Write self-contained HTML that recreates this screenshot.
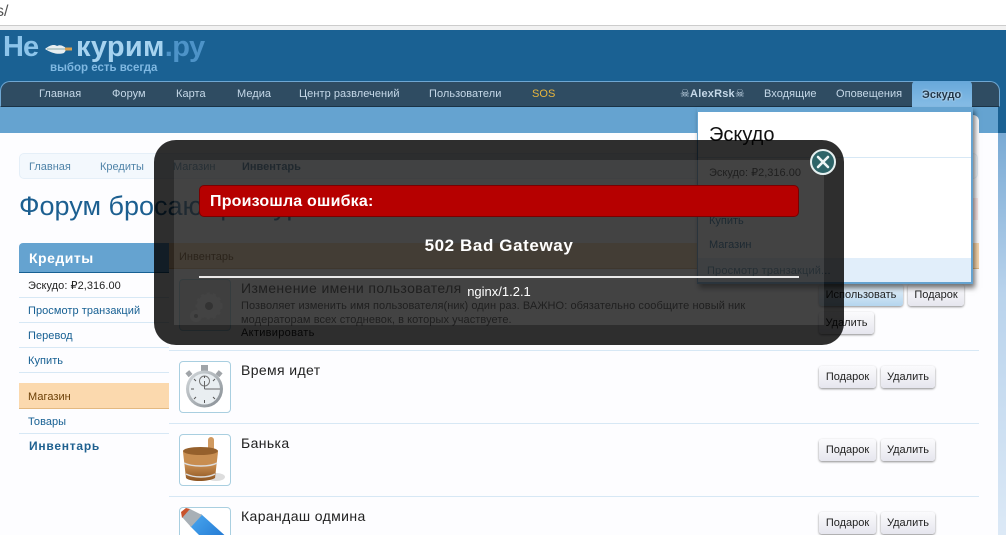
<!DOCTYPE html>
<html lang="ru"><head><meta charset="utf-8">
<style>
html,body{margin:0;padding:0;width:1006px;height:535px;overflow:hidden}
#w{position:relative;width:1006px;height:535px;overflow:hidden;background:#fff;font-family:"Liberation Sans","DejaVu Sans",sans-serif;font-size:11px;color:#222}
.a{position:absolute;white-space:nowrap}
.nav{color:#c5d8e8;font-size:11px;top:88px;line-height:13px;letter-spacing:.05px}
.side{left:28px;font-size:11px;line-height:13px;color:#176093;letter-spacing:.05px}
.ln{position:absolute;height:1px;background:#d7e8f5}
.btn{position:absolute;height:22px;line-height:23px;text-align:center;font-size:11px;color:#222;background:linear-gradient(#fbfbfd,#e6e6ee);border-radius:3px;box-shadow:0 1px 2px rgba(0,0,0,.45)}
.ico{position:absolute;left:179px;width:50px;height:50px;border:1px solid #a9cfe0;border-radius:4px;background:#fff;overflow:hidden}
.t{left:241px;font-size:14px;line-height:16px;color:#222;letter-spacing:.38px}
.lg{font-size:29px;line-height:36px;font-weight:bold;letter-spacing:.3px}
</style></head><body><div id="w">
<div class="a" style="left:-4px;top:2px;font-size:16px;line-height:20px;color:#555">s/</div>
<div class="a" style="left:0;top:25px;width:1006px;height:5px;background:linear-gradient(#ccc,#ccc 1px,#f1f1f1 1px,#f1f1f1)"></div>
<div class="a" style="left:0;top:30px;width:1006px;height:103px;background:#1a6193"></div>
<div class="a" style="left:0;top:107px;width:998px;height:26px;background:#65a3d0"></div>
<div class="a" style="left:0;top:133px;width:1006px;height:402px;background:#fdfdff"></div>
<div class="a" style="left:998px;top:133px;width:8px;height:402px;background:linear-gradient(#79aad4,#b9d3ec 40%,#dce9f6)"></div>
<div class="a" style="left:965px;top:115px;width:14px;height:20px;background:#fdfdff;border-radius:0 6px 0 0"></div>

<!-- Logo -->
<div class="a lg" style="left:3px;top:29px;color:#8cc4ea;letter-spacing:-1px">Не</div>
<svg class="a" style="left:44px;top:40px" width="30" height="18" viewBox="0 0 30 18"><path d="M1 9 C6 5 10 4 13 6 C16 4 20 6 23 9 L20 13 C14 15 7 13 1 9Z" fill="#e8eef0"/><path d="M3 9 H21" stroke="#8aa" stroke-width="1"/><rect x="21" y="7.500" width="7" height="3" fill="#d8a050"/></svg>
<div class="a lg" style="left:76px;top:29px;color:#a6d3f0">курим<span style="color:#4d93c8;letter-spacing:-.6px">.ру</span></div>
<div class="a" style="left:50px;top:61px;font-size:11.500px;line-height:15px;font-weight:bold;color:#7fb8e2">выбор есть всегда</div>

<!-- Nav bar -->
<div class="a" style="left:0;top:81px;width:1000px;height:26px;box-sizing:border-box;background:#2f4c62;border:1px solid #6fa7d2;border-bottom:1px solid #1a3245;border-radius:10px 10px 0 0"></div>
<div class="a nav" style="left:39px;top:88px">Главная</div>
<div class="a nav" style="left:112px">Форум</div>
<div class="a nav" style="left:176px">Карта</div>
<div class="a nav" style="left:237px">Медиа</div>
<div class="a nav" style="left:299px">Центр развлечений</div>
<div class="a nav" style="left:429px">Пользователи</div>
<div class="a nav" style="left:532px;color:#e8b53c">SOS</div>
<div class="a nav" style="left:680px;font-weight:bold;letter-spacing:.2px">☠AlexRsk☠</div>
<div class="a nav" style="left:764px">Входящие</div>
<div class="a nav" style="left:836px">Оповещения</div>
<div class="a" style="left:912px;top:81px;width:60px;height:31px;border-radius:4px 4px 0 0;background:linear-gradient(#67a8da,#8dc1e8)"></div>
<div class="a nav" style="left:922px;top:89px;color:#23384a;font-weight:bold;text-shadow:0 0 2px #fff">Эскудо</div>

<!-- Breadcrumb -->
<div class="a" style="left:19px;top:153px;width:959px;height:26px;box-sizing:border-box;background:#f3f8fd;border:1px solid #e5eff8;border-radius:5px"></div>
<div class="a" style="left:29px;top:161px;line-height:13px;color:#4f83a8">Главная</div>
<div class="a" style="left:100px;top:161px;line-height:13px;color:#4f83a8">Кредиты</div>
<div class="a" style="left:173px;top:161px;line-height:13px;color:#4f83a8">Магазин</div>
<div class="a" style="left:242px;top:161px;line-height:13px;color:#2b5a80;font-weight:bold">Инвентарь</div>

<!-- Title -->
<div class="a" style="left:19px;top:190px;font-size:27px;line-height:32px;color:#1c5f90">Форум бросающих курить</div>

<!-- Sidebar -->
<div class="a" style="left:19px;top:243px;width:150px;height:30px;background:#65a3d0;border-bottom:1px solid #176093;box-sizing:border-box;border-radius:4px 0 0 0"></div>
<div class="a" style="left:29px;top:250px;font-size:14px;line-height:16px;font-weight:bold;color:#fff;letter-spacing:.5px">Кредиты</div>
<div class="a side" style="top:280px;color:#222">Эскудо: ₽2,316.00</div>
<div class="ln" style="left:19px;top:297px;width:150px"></div>
<div class="a side" style="top:305px">Просмотр транзакций</div>
<div class="ln" style="left:19px;top:322px;width:150px"></div>
<div class="a side" style="top:330px">Перевод</div>
<div class="ln" style="left:19px;top:347px;width:150px"></div>
<div class="a side" style="top:355px">Купить</div>
<div class="ln" style="left:19px;top:372px;width:150px"></div>
<div class="a" style="left:19px;top:383px;width:150px;height:26px;box-sizing:border-box;background:#fbd9ae;border-bottom:1px solid #e3b981"></div>
<div class="a side" style="top:391px;color:#6b3f06">Магазин</div>
<div class="a side" style="top:416px">Товары</div>
<div class="ln" style="left:19px;top:433px;width:150px"></div>
<div class="a side" style="left:29px;top:440px;font-weight:bold;font-size:12px;letter-spacing:.75px;color:#1f6190">Инвентарь</div>

<!-- Main content -->
<div class="a" style="left:169px;top:243px;width:810px;height:26px;box-sizing:border-box;background:#fbd9ae;border-bottom:1px solid #e3b981"></div>
<div class="a" style="left:179px;top:251px;line-height:13px;color:#6b3f06">Инвентарь</div>
<div class="a" style="left:972px;top:198px;width:6px;height:22px;background:#fde8e8"></div>

<div class="ico" style="top:279px;background:#e6e6e6"><svg width="50" height="50"><circle cx="29" cy="26" r="12" fill="#fff" stroke="#fff" stroke-width="3" stroke-dasharray="3 3"/><circle cx="29" cy="26" r="4" fill="#999"/><circle cx="16" cy="36" r="6" fill="#fff"/><circle cx="16" cy="36" r="2" fill="#aaa"/></svg></div>
<div class="a t" style="top:280px">Изменение имени пользователя</div>
<div class="a" style="left:241px;top:299px;line-height:14px;color:#222;letter-spacing:.07px">Позволяет изменить имя пользователя(ник) один раз. ВАЖНО: обязательно сообщите новый ник<br>модераторам всех стодневок, в которых участвуете.</div>
<div class="a" style="left:241px;top:327px;line-height:13px;color:#222;letter-spacing:.3px">Активировать</div>
<div class="btn" style="left:819px;top:284px;width:84px;background:linear-gradient(#eaf4fb,#b4d5ee)">Использовать</div>
<div class="btn" style="left:908px;top:284px;width:56px">Подарок</div>
<div class="btn" style="left:819px;top:312px;width:55px">Удалить</div>
<div class="ln" style="left:169px;top:350px;width:810px"></div>

<div class="ico" style="top:361px"><svg width="50" height="50" viewBox="0 0 50 50"><defs><linearGradient id="g1" x1="0" y1="0" x2="1" y2="1"><stop offset="0" stop-color="#d5dadd"/><stop offset="1" stop-color="#858c92"/></linearGradient><linearGradient id="g2" x1="0" y1="0" x2="0" y2="1"><stop offset="0" stop-color="#c98f52"/><stop offset=".5" stop-color="#c88d50"/><stop offset="1" stop-color="#8d5522"/></linearGradient><linearGradient id="g3" x1="0" y1="0" x2="1" y2="1"><stop offset="0" stop-color="#4aa8f0"/><stop offset="1" stop-color="#1568c8"/></linearGradient></defs><rect x="21" y="3" width="7" height="7" fill="#a0a4a8"/><rect x="6" y="9" width="5" height="5" fill="#a0a4a8" transform="rotate(-40 9 11)"/><rect x="37" y="9" width="5" height="5" fill="#a0a4a8" transform="rotate(40 39 11)"/><circle cx="24.500" cy="27" r="18.500" fill="url(#g1)"/><circle cx="24.500" cy="27" r="15.500" fill="#e9eef1"/><circle cx="24.500" cy="19" r="5" fill="none" stroke="#777" stroke-width="1"/><path d="M24.500 27 H40 M24.500 19 V27" stroke="#666" stroke-width="1"/><path d="M24.500 14 V16 M24.500 38 V41 M11 27 H14 M14 17 L16 19 M35 17 L33 19 M14 37 L16 35 M35 37 L33 35" stroke="#555" stroke-width="1"/></svg></div>
<div class="a t" style="top:362px">Время идет</div>
<div class="btn" style="left:819px;top:366px;width:57px">Подарок</div>
<div class="btn" style="left:881px;top:366px;width:54px">Удалить</div>
<div class="ln" style="left:169px;top:423px;width:810px"></div>

<div class="ico" style="top:434px"><svg width="50" height="50" viewBox="0 0 50 50"><ellipse cx="36" cy="42" rx="9" ry="4" fill="#ddd"/><rect x="28" y="2" width="6" height="18" rx="3" fill="#d09a60"/><path d="M3 17 C3 12 37 12 38 17 L35 43 C28 47 10 47 6 43Z" fill="url(#g2)"/><ellipse cx="20.500" cy="16" rx="17.500" ry="4" fill="#95602c"/><path d="M4 28 C12 32 30 32 37 28 M6 39 C14 43 28 43 35 39" stroke="#ddd" stroke-width="1.500" fill="none"/></svg></div>
<div class="a t" style="top:435px">Банька</div>
<div class="btn" style="left:819px;top:439px;width:57px">Подарок</div>
<div class="btn" style="left:881px;top:439px;width:54px">Удалить</div>
<div class="ln" style="left:169px;top:496px;width:810px"></div>

<div class="ico" style="top:507px"><svg width="50" height="50" viewBox="0 0 50 50"><path d="M10 18 L21 6 L50 32 L38 46Z" fill="url(#g3)"/><path d="M2 9 L10 1 L22 7 L11 19Z" fill="#a8b0b6"/><path d="M2 10 L10 1 L6 0 L1 4Z" fill="#c8532c"/></svg></div>
<div class="a t" style="top:508px">Карандаш одмина</div>
<div class="btn" style="left:819px;top:512px;width:57px">Подарок</div>
<div class="btn" style="left:881px;top:512px;width:54px">Удалить</div>

<!-- Dropdown -->
<div class="a" style="left:697px;top:107px;width:276px;height:177px;box-sizing:border-box;background:#fff;border:1px solid #65a3d0;border-top:5px solid #65a3d0;border-right:2px solid #65a3d0;border-bottom:2px solid #65a3d0;box-shadow:2px 4px 5px rgba(0,0,0,.55)"></div>
<div class="a" style="left:709px;top:123px;font-size:20px;line-height:24px;color:#111">Эскудо</div>
<div class="ln" style="left:698px;top:157px;width:273px"></div>
<div class="a" style="left:709px;top:167px;line-height:13px;color:#222">Эскудо: ₽2,316.00</div>
<div class="a" style="left:709px;top:215px;line-height:13px;color:#176093">Купить</div>
<div class="a" style="left:709px;top:239px;line-height:13px;color:#176093">Магазин</div>
<div class="a" style="left:698px;top:258px;width:273px;height:24px;background:#e1eefa"></div>
<div class="a" style="left:707px;top:265px;line-height:13px;color:#4f83a8;letter-spacing:.15px">Просмотр транзакций...</div>

<!-- Overlay -->
<div class="a" style="left:154px;top:140px;width:690px;height:205px;background:rgba(0,0,0,.82);border-radius:22px"></div>
<div class="a" style="left:174px;top:160px;width:650px;height:165px;background:rgba(255,255,255,.1)"></div>
<div class="a" style="left:199px;top:185px;width:600px;height:32px;box-sizing:border-box;background:#b60000;border:1px solid #7a0000;border-radius:5px"></div>
<div class="a" style="left:210px;top:193px;font-size:16px;line-height:18px;font-weight:bold;letter-spacing:.2px;color:#fff">Произошла ошибка:</div>
<div class="a" style="left:199px;top:236px;width:600px;text-align:center;font-size:17px;line-height:20px;font-weight:bold;letter-spacing:.6px;color:#fff">502 Bad Gateway</div>
<div class="a" style="left:199px;top:276px;width:600px;height:2px;background:#e8e8e8"></div>
<div class="a" style="left:199px;top:285px;width:600px;text-align:center;font-size:13px;line-height:14px;color:#fff">nginx/1.2.1</div>
<svg class="a" style="left:809px;top:148px" width="28" height="28" viewBox="0 0 28 28"><circle cx="14" cy="14" r="12" fill="#2d6468" stroke="#e6f0f0" stroke-width="2"/><path d="M9 9 L19 19 M19 9 L9 19" stroke="#eef5f5" stroke-width="2.600" stroke-linecap="round"/></svg>
</div></body></html>
